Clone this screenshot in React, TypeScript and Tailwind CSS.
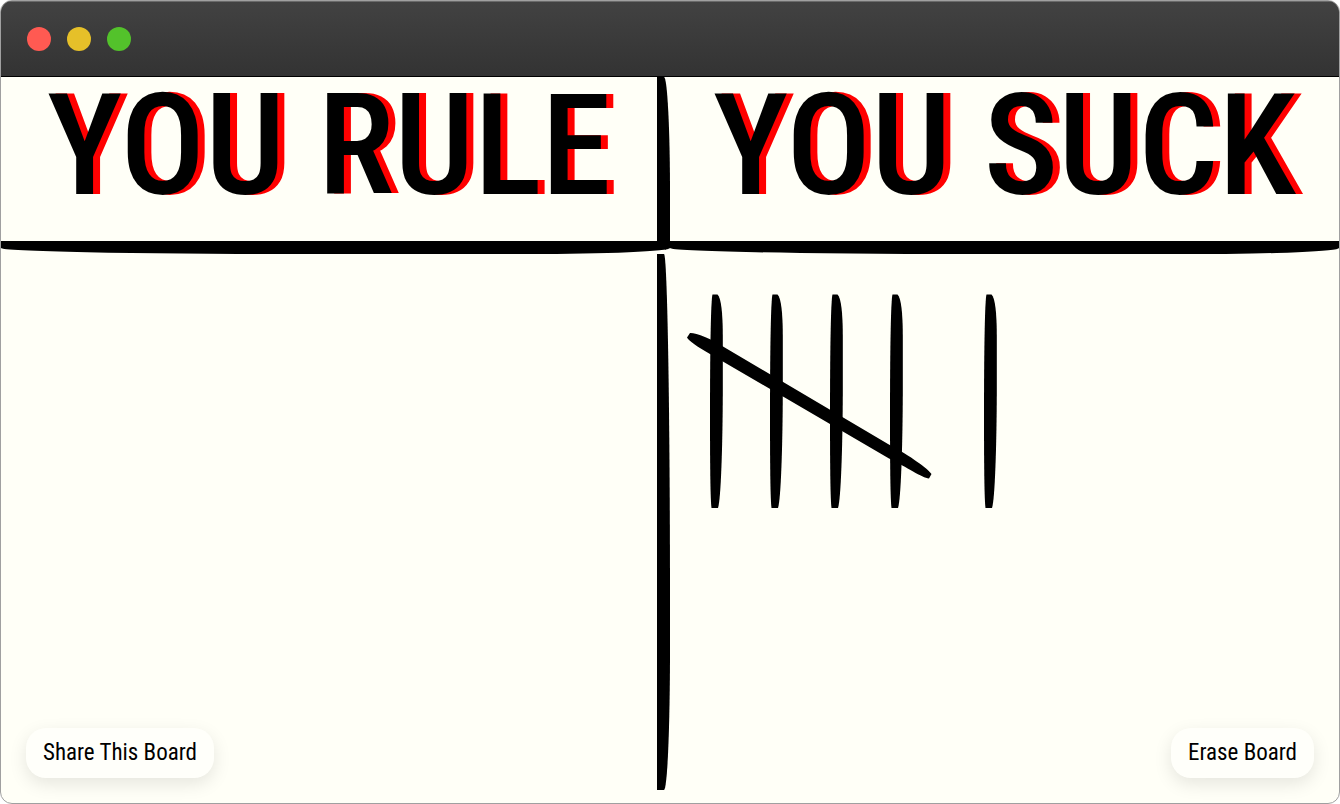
const FONT = "font-['Roboto_Condensed','Open_Sans_Condensed','Liberation_Sans_Narrow',Roboto,sans-serif]";

const MARK =
  'M2.5 .5H7.500C11 4 12.800 18 12.800 42V100C12.600 150 11 205 8 214H1.5C.3 205 0 170 0 120C0 50 1 5 2.5 .5Z';
const SLASH =
  'M3 39C8 38.500 25 45 36 52.500L201 150C225 163 240 174 244.500 180L242 184.500C235 184 220 173 202 164.500L23 60C10 52.500 2 47 0 43.500Z';

function Five() {
  return (
    <svg width="245" height="214" viewBox="0 0 245 214" role="img" aria-label="Five">
      {[23, 83, 143, 203].map((x) => (
        <path key={x} d={MARK} transform={`translate(${x} 0)`} />
      ))}
      <path d={SLASH} />
    </svg>
  );
}

function One() {
  return (
    <svg width="13" height="214" viewBox="0 0 13 214" role="img" aria-label="One">
      <path d={MARK} />
    </svg>
  );
}

function Tally({ count }: { count: number }) {
  return (
    <div className="flex flex-wrap gap-[52px]">
      {Array.from({ length: Math.floor(count / 5) }, (_, i) => (
        <Five key={`five-${i}`} />
      ))}
      {Array.from({ length: count % 5 }, (_, i) => (
        <One key={`one-${i}`} />
      ))}
    </div>
  );
}

const TITLE =
  'border-b-[13px] border-black pt-[5px] pb-[31px] text-center text-[141px] leading-[128px] font-medium whitespace-nowrap [text-shadow:7px_0_0_red]';
const BUTTON =
  'h-[50px] cursor-pointer rounded-[20px] bg-[#fffffa] px-[17px] text-[23px] text-black shadow-[0_6px_18px_rgba(0,0,0,0.1)]';

export default function App() {
  return (
    <div className="min-h-screen bg-white">
      <main
        className={`relative flex min-h-screen flex-col overflow-hidden rounded-xl border border-[#a0a0a0] bg-[#fffff7] text-black ${FONT}`}
      >
        <header className="flex h-[76px] shrink-0 items-center gap-4 border-b border-black bg-linear-to-b from-[#424242] to-[#333333] px-[26px] shadow-[inset_0_1px_0_#6a6a6a]">
          <span className="size-6 rounded-full bg-[#ff5a52]" />
          <span className="size-6 rounded-full bg-[#e6c029]" />
          <span className="size-6 rounded-full bg-[#53c22b]" />
        </header>

        <div className="grid flex-1 grid-cols-2 grid-rows-[auto_1fr] pb-[13px]">
          <h2
            className={`${TITLE} rounded-tr-[6px_115px] rounded-br-[141px_6px] rounded-bl-[294px_6px] border-r-[13px]`}
          >
            YOU RULE
          </h2>
          <h2 className={`${TITLE} rounded-br-[141px_6px] rounded-bl-[294px_6px]`}>YOU SUCK</h2>
          <section
            aria-label="You rule"
            className="rounded-tr-[6px_348px] rounded-br-[6px_140px] border-r-[13px] border-black px-[17px] pt-10"
          >
            <Tally count={0} />
          </section>
          <section aria-label="You suck" className="px-[17px] pt-10">
            <Tally count={6} />
          </section>
        </div>

        <div className="absolute inset-x-[25px] bottom-[25px] flex justify-between">
          <button type="button" className={BUTTON}>
            Share This Board
          </button>
          <button type="button" className={BUTTON}>
            Erase Board
          </button>
        </div>
      </main>
    </div>
  );
}
